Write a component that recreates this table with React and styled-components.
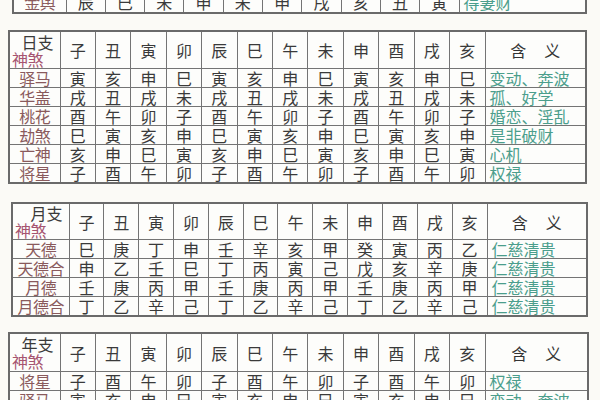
import React from 'react'
import styled, { createGlobalStyle } from 'styled-components'

const GlobalStyle = createGlobalStyle`
  html, body {
    margin: 0;
    padding: 0;
    background: #fbfaf6;
    font-family: "Noto Sans CJK SC", "Noto Sans", sans-serif;
  }
`

const Page = styled.div`
  width: 600px;
  height: 400px;
  overflow: hidden;
  display: flex;
  flex-direction: column;
`

const Section = styled.div`
  margin-left: ${(p) => p.left}px;
  margin-top: ${(p) => p.top}px;
  width: ${(p) => p.width}px;
`

const Table = styled.table`
  width: 100%;
  table-layout: fixed;
  border-collapse: collapse;
  border: 2px solid #6a6a6a;
  background: #fdfdfb;
`

const Cell = styled.td`
  border: 1px solid #747474;
  padding: 0;
  height: ${(p) => p.h || 18}px;
  text-align: center;
  vertical-align: middle;
  font-size: 16px;
  line-height: 16px;
  color: #3a3a3a;
  white-space: nowrap;
`

const Label = styled(Cell)`
  color: #8a5a5c;
  letter-spacing: -0.5px;
`

const Meaning = styled(Cell)`
  color: #4b9e8c;
  text-align: left;
  padding-left: 4px;
`

const HeadTitle = styled(Cell)`
  letter-spacing: 18px;
  padding-left: 18px;
  color: #333;
`

const Corner = styled.div`
  display: flex;
  flex-direction: column;
  gap: 1px;
  padding: 0 2px;
`

const CornerTop = styled.span`
  align-self: flex-end;
  color: #3a3a3a;
  padding-right: 4px;
`

const CornerBottom = styled.span`
  align-self: flex-start;
  color: #a65470;
  letter-spacing: -0.5px;
`

const BRANCHES = ['子', '丑', '寅', '卯', '辰', '巳', '午', '未', '申', '酉', '戌', '亥']

const dayRows = [
  ['驿马', '寅亥申巳寅亥申巳寅亥申巳', '变动、奔波'],
  ['华盖', '戌丑戌未戌丑戌未戌丑戌未', '孤、好学'],
  ['桃花', '酉午卯子酉午卯子酉午卯子', '婚恋、淫乱'],
  ['劫煞', '巳寅亥申巳寅亥申巳寅亥申', '是非破财'],
  ['亡神', '亥申巳寅亥申巳寅亥申巳寅', '心机'],
  ['将星', '子酉午卯子酉午卯子酉午卯', '权禄'],
]

const monthRows = [
  ['天德', '巳庚丁申壬辛亥甲癸寅丙乙', '仁慈清贵'],
  ['天德合', '申乙壬巳丁丙寅己戊亥辛庚', '仁慈清贵'],
  ['月德', '壬庚丙甲壬庚丙甲壬庚丙甲', '仁慈清贵'],
  ['月德合', '丁乙辛己丁乙辛己丁乙辛己', '仁慈清贵'],
]

const yearRows = [
  ['将星', '子酉午卯子酉午卯子酉午卯', '权禄'],
  ['驿马', '寅亥申巳寅亥申巳寅亥申巳', '变动、奔波'],
]

const Cols = ({ first, count, last }) => (
  <colgroup>
    <col style={{ width: first }} />
    {Array.from({ length: count }).map((_, i) => (
      <col key={i} />
    ))}
    <col style={{ width: last }} />
  </colgroup>
)

const BranchTable = ({ title, rows, first, last, headH, rowH }) => (
  <Table>
    <Cols first={first} count={12} last={last} />
    <tbody>
      <tr>
        <Cell h={headH}>
          <Corner>
            <CornerTop>{title}</CornerTop>
            <CornerBottom>神煞</CornerBottom>
          </Corner>
        </Cell>
        {BRANCHES.map((b) => (
          <Cell key={b} h={headH}>{b}</Cell>
        ))}
        <HeadTitle h={headH}>含义</HeadTitle>
      </tr>
      {rows.map(([name, vals, mean]) => (
        <tr key={name}>
          <Label h={rowH}>{name}</Label>
          {vals.split('').map((v, i) => (
            <Cell key={i} h={rowH}>{v}</Cell>
          ))}
          <Meaning h={rowH}>{mean}</Meaning>
        </tr>
      ))}
    </tbody>
  </Table>
)

export default function App() {
  return (
    <Page>
      <GlobalStyle />
      <Section left={12} top={-11} width={575}>
        <Table>
          <Cols first={53} count={10} last={127} />
          <tbody>
            <tr>
              <Label h={21}>金舆</Label>
              {'辰巳未申未申戌亥丑寅'.split('').map((v, i) => (
                <Cell key={i} h={21}>{v}</Cell>
              ))}
              <Meaning h={21}>得妻财</Meaning>
            </tr>
          </tbody>
        </Table>
      </Section>
      <Section left={8} top={16} width={579}>
        <BranchTable title="日支" rows={dayRows} first={51} last={101} headH={36} rowH={18} />
      </Section>
      <Section left={11} top={18} width={577}>
        <BranchTable title="月支" rows={monthRows} first={57} last={100} headH={35} rowH={18} />
      </Section>
      <Section left={8} top={15} width={581}>
        <BranchTable title="年支" rows={yearRows} first={51} last={103} headH={37} rowH={18} />
      </Section>
    </Page>
  )
}
